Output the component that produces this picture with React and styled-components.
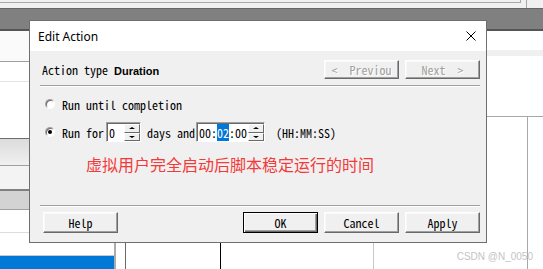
import React from "react";
import styled, { createGlobalStyle } from "styled-components";

const GlobalStyle = createGlobalStyle`
  html, body {
    margin: 0;
    padding: 0;
  }
  body {
    width: 543px;
    height: 269px;
    overflow: hidden;
    background: #fff;
  }
`;

const mono = `"Noto Sans Mono CJK SC", "DejaVu Sans Mono", monospace`;

const Screen = styled.div`
  position: relative;
  width: 543px;
  height: 269px;
  overflow: hidden;
  background: #fff;
  display: flex;
  flex-direction: column;
`;

const TopStrip = styled.div`
  height: 8px;
  display: flex;
  background: #f0f0f0;
`;

const TopPane = styled.div`
  flex: 1;
  height: 2px;
  margin-right: 5px;
  border-bottom: 1px solid #a8a8a8;
  border-right: 1px solid #a8a8a8;
`;

const TopTail = styled.div`
  width: 16px;
  border-left: 1px solid #a8a8a8;
`;

const GrayBand = styled.div`
  height: 20px;
  background: #808080;
  border-top: 1px solid #666;
  border-bottom: 2px solid #555;
`;

const Work = styled.div`
  flex: 1;
  display: flex;
`;

const LeftPanel = styled.div`
  width: 114px;
  display: flex;
  flex-direction: column;
  border-right: 2px solid #acacac;
`;

const PanelRow = styled.div`
  height: ${(p) => p.$h}px;
  background: ${(p) => p.$bg || "#fff"};
  border-bottom: ${(p) => p.$lw || 1}px solid ${(p) => p.$line || "#e0e0e0"};
`;

const Selected = styled.div`
  flex: 1;
  background: #0078d7;
`;

const Main = styled.div`
  flex: 1;
  display: flex;
  flex-direction: column;
`;

const MainTop = styled.div`
  height: 19px;
`;

const MainBand = styled.div`
  height: 6px;
  background: #f0f0f0;
`;

const MainPane = styled.div`
  height: 60px;
  border-bottom: 1px solid #a8a8a8;
`;

const Grid = styled.div`
  flex: 1;
  display: flex;
`;

const Column = styled.div`
  width: ${(p) => (p.$w ? `${p.$w}px` : "auto")};
  flex: ${(p) => (p.$w ? "none" : 1)};
  border-right: ${(p) => (p.$line ? `1px solid ${p.$line}` : "none")};
`;

const Watermark = styled.div`
  position: absolute;
  right: 10px;
  bottom: 6px;
  font: 10px/12px "Liberation Sans", Arial, sans-serif;
  color: #c4c4c4;
`;

/* dialog window */

const Dialog = styled.div`
  position: absolute;
  left: 29px;
  top: 20px;
  width: 458px;
  height: 223px;
  box-sizing: border-box;
  border: 1px solid #6f6f6f;
  display: flex;
  flex-direction: column;
  font-family: ${mono};
  font-size: 12px;
  color: #000;
`;

const TitleBar = styled.div`
  height: 30px;
  flex: none;
  background: #fff;
  display: flex;
  align-items: center;
  justify-content: space-between;
  padding: 0 10px 0 8px;
  font: 12px "Noto Sans", "Open Sans", sans-serif;
  color: #000;
`;

const Body = styled.div`
  flex: 1;
  background: #f0f0f0;
  display: flex;
  flex-direction: column;
  padding: 9px 6px 9px 10px;
`;

const HeaderRow = styled.div`
  height: 19px;
  display: flex;
  align-items: center;
  justify-content: space-between;
`;

const TypeLabel = styled.div`
  padding-left: 2px;
  white-space: pre;
  b {
    font: bold 11px "Liberation Sans", Arial, sans-serif;
  }
`;

const ButtonGroup = styled.div`
  display: flex;
  gap: 6px;
`;

const Button = styled.div`
  width: 75px;
  height: ${(p) => p.$h || 21}px;
  box-sizing: border-box;
  display: flex;
  align-items: center;
  justify-content: center;
  white-space: pre;
  background: #f0f0f0;
  color: ${(p) => (p.$disabled ? "#a0a0a0" : "#000")};
  text-shadow: ${(p) => (p.$disabled ? "1px 1px #fff" : "none")};
  border: 1px solid;
  border-color: ${(p) =>
    p.$default ? "#000" : "#fff #696969 #696969 #fff"};
  box-shadow: ${(p) =>
    p.$default
      ? "inset 1px 1px #fff, inset -1px -1px #696969, inset -2px -2px #a0a0a0"
      : "inset -1px -1px #a0a0a0, inset 1px 1px #f8f8f8"};
`;

const Separator = styled.div`
  margin-top: ${(p) => p.$mt || 0}px;
  border-top: 1px solid #a0a0a0;
  border-bottom: 1px solid #fff;
`;

const OptionRow = styled.div`
  height: ${(p) => p.$h}px;
  margin-top: ${(p) => p.$mt}px;
  display: flex;
  align-items: center;
  padding-left: 5px;
  white-space: pre;
`;

const Radio = styled.div`
  width: 10px;
  height: 10px;
  box-sizing: border-box;
  border-radius: 50%;
  border: 1px solid;
  border-color: #a0a0a0 #fff #fff #a0a0a0;
  background: #fff;
  box-shadow: inset 1px 1px #696969;
  display: flex;
  align-items: center;
  justify-content: center;
  margin-right: 7px;
  &::after {
    content: "";
    width: 4px;
    height: 4px;
    border-radius: 50%;
    background: ${(p) => (p.$checked ? "#000" : "transparent")};
  }
`;

const SpinField = styled.div`
  width: ${(p) => p.$w}px;
  height: 20px;
  box-sizing: border-box;
  display: flex;
  background: #fff;
  border: 1px solid;
  border-color: #a0a0a0 #fff #fff #a0a0a0;
  box-shadow: inset 1px 1px #696969;
  margin-left: ${(p) => p.$ml || 0}px;
`;

const SpinValue = styled.div`
  flex: 1;
  display: flex;
  align-items: center;
  padding-left: ${(p) => p.$pl}px;
  span {
    background: #0078d7;
    color: #fff;
  }
`;

const SpinArrows = styled.div`
  width: 16px;
  display: flex;
  flex-direction: column;
  padding: 1px 0 0;
`;

const SpinArrow = styled.div`
  flex: 1;
  box-sizing: border-box;
  background: #f0f0f0;
  border: 1px solid;
  border-color: #fff #696969 #696969 #fff;
  display: flex;
  align-items: center;
  justify-content: center;
  &::after {
    content: "";
    border-left: 3px solid transparent;
    border-right: 3px solid transparent;
    ${(p) =>
      p.$down
        ? "border-top: 2px solid #000;"
        : "border-bottom: 2px solid #000;"}
  }
`;

const Inline = styled.span`
  margin-left: ${(p) => p.$ml || 0}px;
  margin-right: ${(p) => p.$mr || 0}px;
`;

const Note = styled.div`
  margin-top: 12px;
  padding-left: 46px;
  font: 16px/20px "Noto Sans CJK SC", "Noto Sans", sans-serif;
  color: #f23a3a;
`;

const Footer = styled.div`
  margin-top: auto;
  display: flex;
  flex-direction: column;
`;

const FooterButtons = styled.div`
  margin-top: 5px;
  display: flex;
  justify-content: space-between;
  padding-left: 3px;
`;

const CloseIcon = () => (
  <svg width="10" height="10" viewBox="0 0 10 10">
    <path d="M0.5 0.5L9.5 9.5M9.5 0.5L0.5 9.5" stroke="#000" strokeWidth="1" />
  </svg>
);

const Spin = ({ width, ml, pl, children }) => (
  <SpinField $w={width} $ml={ml}>
    <SpinValue $pl={pl}>{children}</SpinValue>
    <SpinArrows>
      <SpinArrow />
      <SpinArrow $down />
    </SpinArrows>
  </SpinField>
);

const leftRows = [
  { h: 30, bg: "#fafafa", line: "#a0a0a0" },
  { h: 19, bg: "#fff", line: "#e3e3e3" },
  { h: 56, bg: "#fff", line: "#6e6e6e" },
  { h: 26, bg: "linear-gradient(#dcdcdc, #f0f0f0)", line: "#a0a0a0" },
  { h: 23, bg: "#f3f3f3", line: "#808080", lw: 2 },
  { h: 18, bg: "#d3d3d3", line: "#a0a0a0" },
  { h: 22, bg: "#fff", line: "#dcdcdc" },
  { h: 22, bg: "#fff", line: "#c8c8c8" },
];

const columns = [
  { w: 9, line: "#6a6a6a" },
  { w: 94, line: "#000" },
  { w: 152, line: "#c8c8c8" },
  { w: 153, line: "#a8a8a8" },
  {},
];

export default function App() {
  return (
    <>
      <GlobalStyle />
      <Screen>
        <TopStrip>
          <TopPane />
          <TopTail />
        </TopStrip>
        <GrayBand />
        <Work>
          <LeftPanel>
            {leftRows.map((r, i) => (
              <PanelRow key={i} $h={r.h} $bg={r.bg} $line={r.line} $lw={r.lw} />
            ))}
            <Selected />
          </LeftPanel>
          <Main>
            <MainTop />
            <MainBand />
            <MainPane />
            <Grid>
              {columns.map((c, i) => (
                <Column key={i} $w={c.w} $line={c.line} />
              ))}
            </Grid>
          </Main>
        </Work>
        <Watermark>CSDN @N_0050</Watermark>

        <Dialog>
          <TitleBar>
            <span>Edit Action</span>
            <CloseIcon />
          </TitleBar>
          <Body>
            <HeaderRow>
              <TypeLabel>
                Action type <b>Duration</b>
              </TypeLabel>
              <ButtonGroup>
                <Button $h={19} $disabled>{"<  Previou"}</Button>
                <Button $h={19} $disabled>{"Next  >"}</Button>
              </ButtonGroup>
            </HeaderRow>
            <Separator $mt={6} />
            <OptionRow $h={16} $mt={9}>
              <Radio />
              Run until completion
            </OptionRow>
            <OptionRow $h={20} $mt={10}>
              <Radio $checked />
              Run for
              <Spin width={35} ml={2} pl={2}>0</Spin>
              <Inline $ml={6} $mr={1}>days and</Inline>
              <Spin width={69} pl={2}>
                00:<span>02</span>:00
              </Spin>
              <Inline $ml={11}>(HH:MM:SS)</Inline>
            </OptionRow>
            <Note>虚拟用户完全启动后脚本稳定运行的时间</Note>
            <Footer>
              <Separator />
              <FooterButtons>
                <Button>Help</Button>
                <ButtonGroup>
                  <Button $default>OK</Button>
                  <Button>Cancel</Button>
                  <Button>Apply</Button>
                </ButtonGroup>
              </FooterButtons>
            </Footer>
          </Body>
        </Dialog>
      </Screen>
    </>
  );
}
